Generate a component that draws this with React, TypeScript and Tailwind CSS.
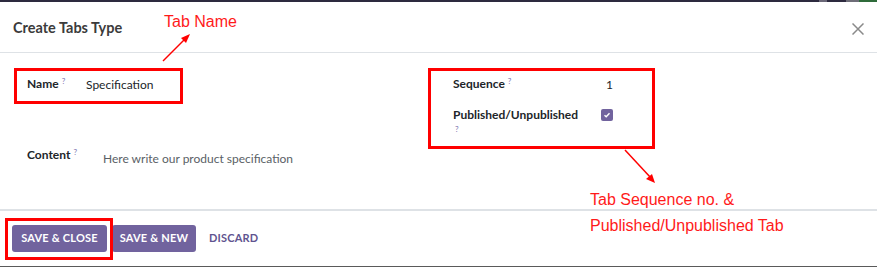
import React from 'react';

const Help: React.FC<{ className?: string }> = ({ className = '' }) => (
  <sup className={`text-[8px] font-normal text-[#7c74b0] ${className}`}>?</sup>
);

const Label: React.FC<{ children: React.ReactNode; width: string }> = ({ children, width }) => (
  <div className={`${width} shrink-0 text-[12px] leading-[16px] font-bold text-[#212529]`}>
    {children}
    <Help className="ml-[3px]" />
  </div>
);

export default function App() {
  return (
    <div className="w-[877px] h-[267px] bg-white relative overflow-hidden flex flex-col font-['Lato',sans-serif]">
      {/* top strip of the page behind the dialog */}
      <div className="h-[2px] bg-[#2d2a3f] flex justify-end shrink-0">
        <div className="w-[8px] bg-[#6b6878] mr-[19px]" />
        <div className="w-[13px] bg-[#6e6d78]" />
        <div className="w-[18px] bg-[#2f6b3a]" />
      </div>

      {/* header */}
      <div className="h-[51px] shrink-0 flex items-center justify-between pl-[13px] pr-[13px] border-b border-[#dee2e6]">
        <h4 className="text-[14.5px] font-bold text-[#3b3b3b] mt-[2px]">Create Tabs Type</h4>
        <svg width="12" height="12" viewBox="0 0 12 12" className="mt-[3px]">
          <path d="M0.5 0.5 L11.5 11.5 M11.5 0.5 L0.5 11.5" stroke="#8a8a8a" strokeWidth="1.5" />
        </svg>
      </div>

      {/* body */}
      <div className="flex-1 flex">
        <div className="w-[453px] shrink-0 pl-[27px] pt-[23px]">
          <div className="flex items-center h-[16px]">
            <Label width="w-[59px]">Name</Label>
            <span className="text-[12px] leading-[16px] text-[#212529] mt-[2px]">Specification</span>
          </div>
          <div className="flex mt-[55px]">
            <Label width="w-[76px]">Content</Label>
            <span className="text-[12px] leading-[16px] text-[#5a5f66] mt-[4px]">Here write our product specification</span>
          </div>
        </div>
        <div className="pt-[23px]">
          <div className="flex items-center h-[16px]">
            <Label width="w-[153px]">Sequence</Label>
            <span className="text-[12px] leading-[16px] text-[#212529] mt-[2px]">1</span>
          </div>
          <div className="flex items-start mt-[15px]">
            <div className="w-[148px] shrink-0">
              <div className="text-[12px] leading-[16px] font-bold text-[#212529]">Published/Unpublished</div>
              <div className="text-[8px] leading-[10px] text-[#7c74b0] pl-[2px] mt-[1px]">?</div>
            </div>
            <div className="w-[12px] h-[12px] mt-[2px] rounded-[2px] bg-[#71639e] flex items-center justify-center">
              <svg width="8" height="8" viewBox="0 0 8 8">
                <path d="M1.5 4.2 L3.2 5.8 L6.5 2.2" fill="none" stroke="white" strokeWidth="1.4" />
              </svg>
            </div>
          </div>
        </div>
      </div>

      {/* footer */}
      <div className="h-[57px] shrink-0 border-t-2 border-[#dee2e6] flex items-center gap-[5px] pl-[12px] pb-[1px]">
        <button className="h-[27px] w-[95px] rounded-[3px] bg-[#71639e] text-white text-[11px] font-bold tracking-[0.2px]">SAVE &amp; CLOSE</button>
        <button className="h-[27px] w-[84px] rounded-[3px] bg-[#71639e] text-white text-[11px] font-bold tracking-[0.2px]">SAVE &amp; NEW</button>
        <button className="h-[27px] px-[8px] text-[#5f5490] text-[11px] font-bold tracking-[0.2px]">DISCARD</button>
      </div>
      <div className="h-[1px] bg-[#5a5a5a] shrink-0" />

      {/* annotations */}
      <div className="absolute left-[14px] top-[68px] w-[169px] h-[36px] border-[3px] border-[#ff0000]" />
      <div className="absolute left-[428px] top-[68px] w-[227px] h-[81px] border-[3px] border-[#ff0000]" />
      <div className="absolute left-[5px] top-[218px] w-[108px] h-[42px] border-[3px] border-[#ff0000]" />
      <div className="absolute left-[164px] top-[14px] text-[16px] leading-[16px] text-[#ff1a1a] font-['Liberation_Sans',sans-serif]">Tab Name</div>
      <div className="absolute left-[590px] top-[192px] text-[16px] leading-[16px] text-[#ff1a1a] font-['Liberation_Sans',sans-serif]">Tab Sequence no. &amp;</div>
      <div className="absolute left-[590px] top-[218px] text-[16px] leading-[16px] text-[#ff1a1a] font-['Liberation_Sans',sans-serif]">Published/Unpublished Tab</div>
      <svg className="absolute left-0 top-0 pointer-events-none" width="877" height="267">
        <line x1="163" y1="61" x2="185" y2="39" stroke="#ff0000" strokeWidth="1.5" />
        <polygon points="190,34 181,38 186,43" fill="#ff0000" />
        <line x1="625" y1="150" x2="651" y2="178" stroke="#ff0000" strokeWidth="1.5" />
        <polygon points="655,183 646,179 652,174" fill="#ff0000" />
      </svg>
    </div>
  );
}
